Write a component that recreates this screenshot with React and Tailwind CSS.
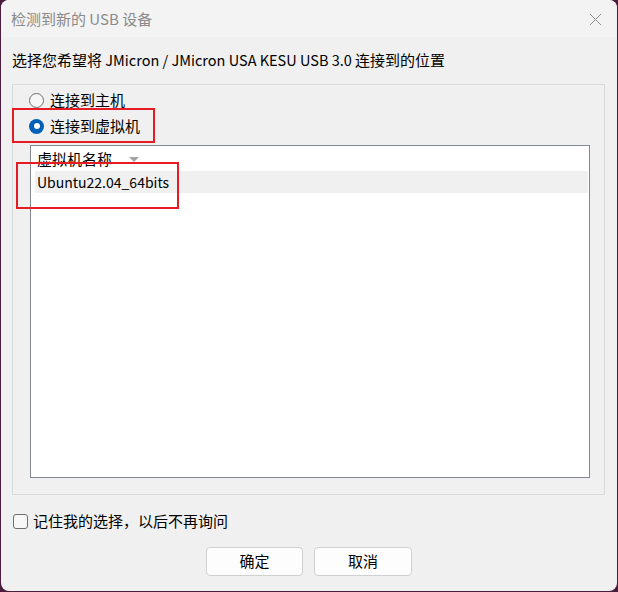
import { useState } from 'react';

const font = { fontFamily: '"Noto Sans CJK SC", "Noto Sans", sans-serif' };

function Radio({ checked, label, onClick }) {
  return (
    <div className="flex items-center h-[20px] gap-[6px] cursor-default" onClick={onClick}>
      {checked ? (
        <span className="w-[15px] h-[15px] rounded-full bg-[#005fb8] flex items-center justify-center">
          <span className="w-[6px] h-[6px] rounded-full bg-white" />
        </span>
      ) : (
        <span className="w-[15px] h-[15px] rounded-full border border-[#6e6e6e] bg-[#f7f7f7]" />
      )}
      <span className="text-[15px] leading-[20px] text-black">{label}</span>
    </div>
  );
}

export default function App() {
  const [target,   setTarget]   = useState('vm');
  const [remember, setRemember] = useState(false);

  return (
    <div className="w-[618px] h-[592px] bg-[#4a1d3d] pl-[1px] pr-[1px]" style={font}>
      <div className="relative w-[616px] h-[591px] bg-[#f0f0f0] rounded-[8px] overflow-hidden flex flex-col">
        {/* Title bar */}
        <div className="h-[37px] bg-[#f3f3f3] flex items-center justify-between pl-[10px] pr-[15px]">
          <span className="text-[15px] text-[#8a8a8a] leading-[20px]">检测到新的 USB 设备</span>
          <svg width="13" height="13" viewBox="0 0 13 13" className="mt-[1px]">
            <path d="M1 1 L12 12 M12 1 L1 12" stroke="#8a8a8a" strokeWidth="1" />
          </svg>
        </div>

        <div className="pt-[13px] pl-[11px] text-[15px] leading-[20px] text-black">
          选择您希望将<span className="text-[14.5px]"> JMicron / JMicron USA KESU USB 3.0 </span>连接到的位置
        </div>

        {/* Group box */}
        <div className="mt-[14px] ml-[11px] w-[593px] h-[411px] border border-[#dadada] flex flex-col pt-[5px] pl-[16px] pr-[14px] pb-[16px]">
          <Radio checked={target === 'host'} label="连接到主机" onClick={() => setTarget('host')} />
          <div className="mt-[6px]">
            <Radio checked={target === 'vm'} label="连接到虚拟机" onClick={() => setTarget('vm')} />
          </div>

          {/* VM list */}
          <div className="mt-[9px] ml-[1px] flex-1 border border-[#828790] bg-white flex flex-col">
            <div className="h-[25px] flex items-center pl-[6px] mr-[2px] bg-white">
              <span className="text-[15px] leading-[20px] text-black">虚拟机名称</span>
              <svg width="10" height="5" viewBox="0 0 10 5" className="ml-[17px] mt-[1px]">
                <path d="M0 0 L10 0 L5 5 Z" fill="#a3a3a3" />
              </svg>
            </div>
            <div className="h-[22px] ml-[4px] mr-[1px] bg-[#f0f0f0] flex items-center pl-[2px]">
              <span className="text-[14px] leading-[20px] text-black">Ubuntu22.04_64bits</span>
            </div>
          </div>
        </div>

        {/* Remember */}
        <div className="mt-[18px] ml-[12px] flex items-center gap-[5px] h-[16px]" onClick={() => setRemember(!remember)}>
          <span className="w-[15px] h-[15px] rounded-[3px] border border-[#6e6e6e] bg-[#f7f7f7] flex items-center justify-center">
            {remember && (
              <svg width="10" height="8" viewBox="0 0 10 8">
                <path d="M1 4 L4 7 L9 1" stroke="#000" strokeWidth="1.2" fill="none" />
              </svg>
            )}
          </span>
          <span className="text-[15px] leading-[20px] text-black">记住我的选择，以后不再询问</span>
        </div>

        {/* Buttons */}
        <div className="mt-[18px] flex justify-center gap-[11px]">
          <button className="w-[97px] h-[29px] rounded-[4px] border border-[#d0d0d0] bg-[#fdfdfd] text-[15px] text-black">
            确定
          </button>
          <button className="w-[98px] h-[29px] rounded-[4px] border border-[#d0d0d0] bg-[#fdfdfd] text-[15px] text-black">
            取消
          </button>
        </div>

        {/* Annotation boxes */}
        <div className="absolute left-[11px] top-[108px] w-[143px] h-[35px] border-2 border-[#e51c23]" />
        <div className="absolute left-[15px] top-[162px] w-[163px] h-[47px] border-2 border-[#e51c23]" />
      </div>
    </div>
  );
}
